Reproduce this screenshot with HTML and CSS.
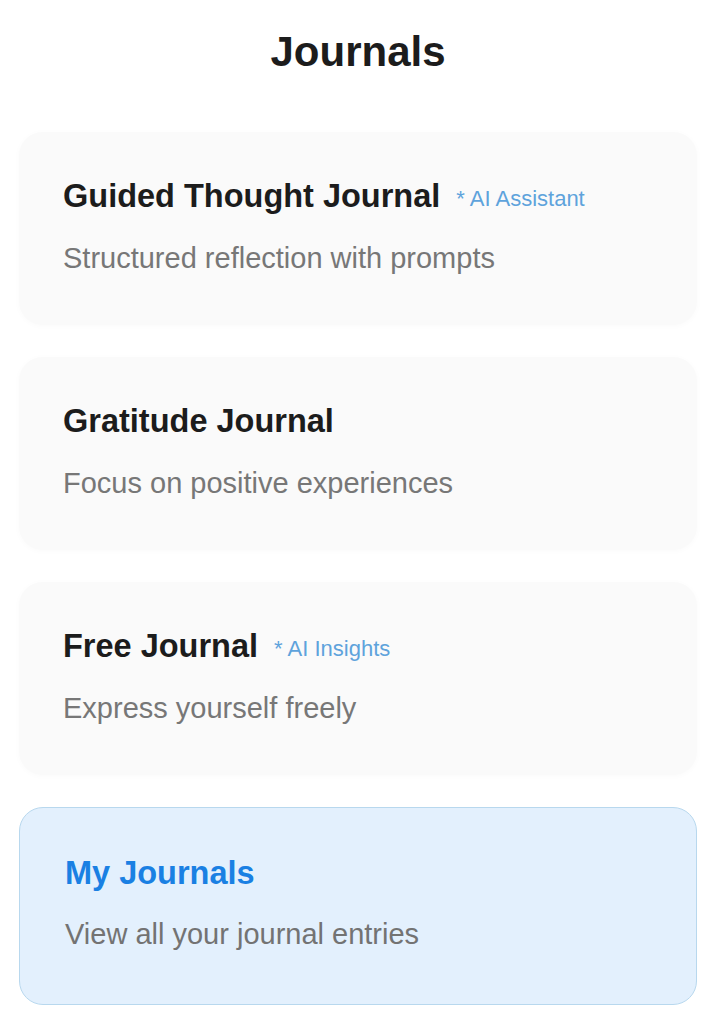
FILE: index.html
```html
<!DOCTYPE html>
<html lang="en">
<head>
<meta charset="utf-8">
<title>Journals</title>
<link rel="stylesheet" href="styles.css">
</head>
<body>
<main class="page">
  <h1 class="page-title">Journals</h1>
  <div class="list">
    <div class="card">
      <div class="card-head">
        <span class="card-title">Guided Thought Journal</span>
        <span class="badge">* AI Assistant</span>
      </div>
      <p class="card-desc">Structured reflection with prompts</p>
    </div>
    <div class="card">
      <div class="card-head">
        <span class="card-title">Gratitude Journal</span>
      </div>
      <p class="card-desc">Focus on positive experiences</p>
    </div>
    <div class="card">
      <div class="card-head">
        <span class="card-title">Free Journal</span>
        <span class="badge">* AI Insights</span>
      </div>
      <p class="card-desc">Express yourself freely</p>
    </div>
    <div class="card card-primary">
      <div class="card-head">
        <span class="card-title">My Journals</span>
      </div>
      <p class="card-desc">View all your journal entries</p>
    </div>
  </div>
</main>
</body>
</html>
```

FILE: styles.css
```css
* { box-sizing: border-box; }
html, body { margin: 0; padding: 0; background: #ffffff; }
body {
  font-family: "Liberation Sans", Arial, sans-serif;
  color: #1a1a1a;
}
.page {
  padding: 24px 28px 0 19px;
}
.page-title {
  margin: 0;
  text-align: center;
  font-size: 42px;
  line-height: 56px;
  font-weight: 700;
  color: #1c1c1c;
}
.list {
  margin-top: 52px;
  display: flex;
  flex-direction: column;
  gap: 32px;
}
.card {
  background: #fafafa;
  border-radius: 24px;
  padding: 46px 44px 50px;
  box-shadow: 0 1px 6px rgba(0, 0, 0, 0.025);
  height: 193px;
}
.card-head {
  display: flex;
  align-items: baseline;
  gap: 16px;
  height: 37px;
}
.card-title {
  font-size: 32.5px;
  line-height: 37px;
  font-weight: 700;
  color: #1c1c1c;
}
.badge {
  font-size: 22px;
  color: #5ea3dc;
  position: relative;
  top: -1px;
}
.card-desc {
  margin: 27px 0 0;
  font-size: 29px;
  line-height: 33px;
  color: #777777;
}
.card-primary {
  background: #e3f0fd;
  border: 1px solid #b8d8ee;
  height: 198px;
  padding: 47px 45px 50px;
  box-shadow: none;
}
.card-primary .card-title {
  color: #1a80e3;
}
.card-primary .card-desc {
  margin-top: 26px;
  color: #737373;
}
```
